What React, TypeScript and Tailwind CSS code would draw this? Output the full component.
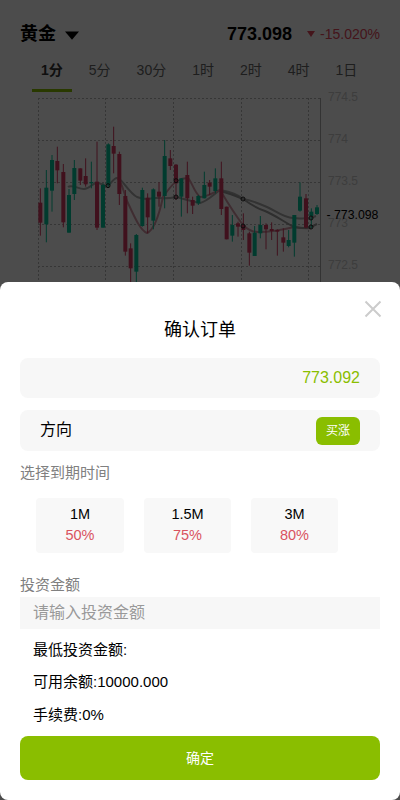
import React from "react";

type C = [number, number, number, number, number, number];
const z = (x: number, a: number, b: number, c: number, d: number, g: number, off = 0): C => [
  off + x / 3,
  90 + a / 3,
  90 + b / 3,
  90 + c / 3,
  90 + d / 3,
  g,
];
const candles: C[] = [
  z(121, 295, 437, 338, 398, 0),
  z(139, 240, 457, 293, 403, 1),
  z(156, 195, 365, 210, 302, 1),
  z(172, 170, 280, 213, 241, 0),
  z(190, 222, 412, 246, 397, 0),
  z(207, 297, 428, 315, 428, 1),
  z(223, 210, 330, 234, 312, 1),
  z(241, 235, 285, 235, 272, 0),
  z(257, 205, 290, 258, 283, 0),
  z(274, 215, 295, 276, 280, 1),
  z(291, 155, 420, 275, 413, 0),
  z(309, 280, 413, 285, 413, 1),
  z(325, 160, 290, 163, 285, 1),
  z(341, 110, 250, 168, 191, 0),
  z(358, 185, 345, 192, 312, 0),
  z(376, 300, 497, 318, 485, 0),
  z(392, 460, 600, 475, 535, 0),
  z(409, 432, 600, 435, 545, 1),
  z(427, 293, 410, 300, 408, 1),
  z(443, 310, 430, 323, 382, 0),
  z(460, 295, 418, 298, 392, 1),
  z(477, 277, 350, 305, 320, 0),
  z(494, 150, 355, 198, 318, 1),
  z(511, 180, 240, 205, 228, 0),
  z(528, 222, 330, 224, 280, 0),
  z(544, 265, 380, 265, 320, 1),
  z(562, 215, 370, 255, 325, 0),
  z(578, 320, 372, 330, 347, 0),
  z(595, 315, 345, 318, 340, 1),
  z(13, 245, 325, 285, 325, 1, 200),
  z(29, 270, 315, 278, 290, 0, 200),
  z(46, 235, 310, 265, 303, 1, 200),
  z(64, 215, 375, 265, 357, 0, 200),
  z(80, 350, 448, 350, 448, 0, 200),
  z(97, 375, 455, 405, 437, 1, 200),
  z(114, 395, 440, 400, 410, 0, 200),
  z(130, 370, 450, 405, 420, 0, 200),
  z(148, 425, 527, 430, 488, 0, 200),
  z(164, 408, 498, 428, 498, 1, 200),
  z(181, 378, 445, 405, 430, 1, 200),
  z(198, 400, 478, 405, 418, 0, 200),
  z(215, 397, 450, 417, 423, 0, 200),
  z(232, 418, 497, 420, 425, 0, 200),
  z(250, 415, 485, 442, 458, 0, 200),
  z(266, 420, 472, 450, 468, 1, 200),
  z(283, 375, 500, 375, 458, 1, 200),
  z(300, 277, 365, 320, 362, 1, 200),
  z(318, 312, 415, 325, 413, 0, 200),
  z(334, 355, 415, 365, 378, 1, 200),
  z(351, 345, 375, 352, 372, 1, 200),
];

const font = "font-['Liberation_Sans','Noto_Sans_CJK_SC',sans-serif]";
const tabs = ["1分", "5分", "30分", "1时", "2时", "4时", "1日"];
const terms = [
  ["1M", "50%"],
  ["1.5M", "75%"],
  ["3M", "80%"],
];

export default function App() {
  return (
    <div className={`relative h-[800px] w-[400px] overflow-hidden bg-white ${font}`}>
      <div className="flex h-[58px] items-center justify-between px-5 pt-[10px]">
        <div className="flex items-center">
          <span className="text-[18px] font-bold text-black">黄金</span>
          <svg width="14" height="9" viewBox="0 0 14 9" className="ml-[9px] mt-[2px]">
            <path d="M0 0.5H14L7 8.8Z" fill="#000" />
          </svg>
        </div>
        <div className="flex items-center">
          <span className="text-[18px] font-bold text-black">773.098</span>
          <svg width="8" height="6" viewBox="0 0 8 6" className="ml-[15px]">
            <path d="M0 0H8L4 6Z" fill="#e5485d" />
          </svg>
          <span className="ml-[5px] text-[14px] text-[#e5485d]">-15.020%</span>
        </div>
      </div>
      <div className="ml-8 flex h-[34px] items-start gap-2 text-[14px] text-[#666]">
        {tabs.map((t, i) => (
          <div
            key={t}
            className={`relative h-[34px] px-[9px] pt-[2px] leading-[20px] ${i === 0 ? "font-bold text-[#333]" : ""}`}
          >
            {t}
            {i === 0 && <span className="absolute bottom-0 left-0 h-[3px] w-[40px] bg-[#8abe00]" />}
          </div>
        ))}
      </div>
      <svg width="400" height="200" viewBox="0 92 400 200" className="block overflow-visible">
        {[98.5, 140.5, 182.5, 224.5, 266.5].map((y) => (
          <line key={y} x1="38" x2="320" y1={y} y2={y} stroke="#b5b5b5" strokeDasharray="2 2" />
        ))}
        {[38.5, 105.5, 173.5, 241.5, 308.5].map((x) => (
          <line key={x} x1={x} x2={x} y1="98" y2="290" stroke="#b5b5b5" strokeDasharray="2 2" />
        ))}
        <line x1="320.5" x2="320.5" y1="98" y2="290" stroke="#aaa" />
        {[
          ["774.5", 101],
          ["774", 142.5],
          ["773.5", 185],
          ["773", 227],
          ["772.5", 269],
        ].map(([t, y]) => (
          <text key={t} x="328" y={y} fontSize="12" fill="#ccc">
            {t}
          </text>
        ))}
        <path
          d="M68 187C72 184 78 189 84 189C90 189 92 183 97 183C102 183 104 186 108 186C112 182 114 178 117 178C122 178 128 192 137 197C142 199 147 200 153 198C160 198 168 199 176 197C184 199 190 201 200 203C206 202 212 196 220 190C226 191 235 192 243 199C250 200 258 203 267 207C276 211 284 218 293 218C300 219 305 218 311 218L316 216"
          fill="none"
          stroke="#aaa"
          strokeWidth="2"
        />
        <path
          d="M117 178C122 180 124 195 128 203C134 216 140 230 147 233C152 231 158 220 163 197C168 190 172 184 177 181C182 178 184 178 188 178C192 182 194 192 200 197C208 197 214 192 220 190C226 200 236 216 243 225C248 230 252 232 258 232C270 232 282 230 294 227C300 228 306 229 311 228"
          fill="none"
          stroke="#d497a6"
          strokeWidth="2"
        />
        <path
          d="M220 191C228 193 236 196 243 199C250 204 256 208 265 211C275 215 284 222 294 227C300 228 306 229 311 227L317 224"
          fill="none"
          stroke="#999"
          strokeWidth="2"
        />
        {candles.map(([x, a, b, c, d, g], i) => {
          const col = g ? "#04c79a" : "#d83a62";
          return (
            <g key={i}>
              <line x1={x} x2={x} y1={a} y2={b} stroke={col} />
              <rect x={x - 2} y={c} width="4" height={Math.max(d - c, 1)} fill={col} />
            </g>
          );
        })}
        {[
          [108, 185.7],
          [176, 180.7],
          [176, 197],
          [243, 199],
          [243, 226],
          [311, 218],
          [311, 227],
        ].map(([x, y], i) => (
          <circle key={i} cx={x} cy={y} r="2" fill="none" stroke="#222" />
        ))}
        <text x="326.5" y="219" fontSize="12.3" fill="#000">
          - 773.098
        </text>
      </svg>

      <div className="absolute inset-0 bg-black/70" />

      <div className="absolute inset-x-0 bottom-0 top-[282px] rounded-[8px] bg-white px-5">
        <svg width="18" height="18" viewBox="0 0 18 18" className="absolute right-[18px] top-[18px]">
          <path d="M1.5 1.5L16.5 16.5M16.5 1.5L1.5 16.5" stroke="#ccc" strokeWidth="2" fill="none" />
        </svg>
        <div className="pt-[35px] text-center text-[18px] font-normal leading-[26px] text-black">确认订单</div>
        <div className="mt-[15px] flex h-[40px] items-center justify-end rounded-[8px] bg-[#f7f7f7] pr-5 text-[16px] text-[#8abe00]">
          773.092
        </div>
        <div className="mt-[12px] flex h-[41px] items-center justify-between rounded-[8px] bg-[#f7f7f7] px-5">
          <span className="pb-[2px] text-[16px] text-black">方向</span>
          <span className="flex h-[28px] w-[44px] items-center justify-center rounded-[6px] bg-[#8abe00] text-[12px] text-white">
            买涨
          </span>
        </div>
        <div className="mt-[11px] text-[15px] leading-[22px] text-[#808080]">选择到期时间</div>
        <div className="ml-4 mt-[14px] flex gap-[20px]">
          {terms.map(([a, b], i) => (
            <div
              key={a}
              className={`flex h-[55px] flex-col items-center justify-center rounded-[4px] bg-[#f8f8f8] pb-[2px] ${
                i === 0 ? "w-[88px]" : "w-[87px]"
              }`}
            >
              <span className="text-[14.5px] leading-[21px] text-black">{a}</span>
              <span className="text-[14.5px] leading-[21px] text-[#d9535f]">{b}</span>
            </div>
          ))}
        </div>
        <div className="mt-[21px] text-[15px] leading-[22px] text-[#808080]">投资金额</div>
        <div className="mt-[1px] flex h-[32px] items-center bg-[#f7f7f7] pl-[13px] text-[16px] text-[#999]">
          请输入投资金额
        </div>
        <div className="pl-[13px] text-[15px] text-black">
          <div className="mt-[11px] leading-[20px]">最低投资金额:</div>
          <div className="mt-[12px] leading-[20px]">可用余额:10000.000</div>
          <div className="mt-[13px] leading-[20px]">手续费:0%</div>
        </div>
        <button className="mt-[11px] block h-[44px] w-full rounded-[8px] bg-[#8abe00] text-[14px] text-white">确定</button>
      </div>
    </div>
  );
}
